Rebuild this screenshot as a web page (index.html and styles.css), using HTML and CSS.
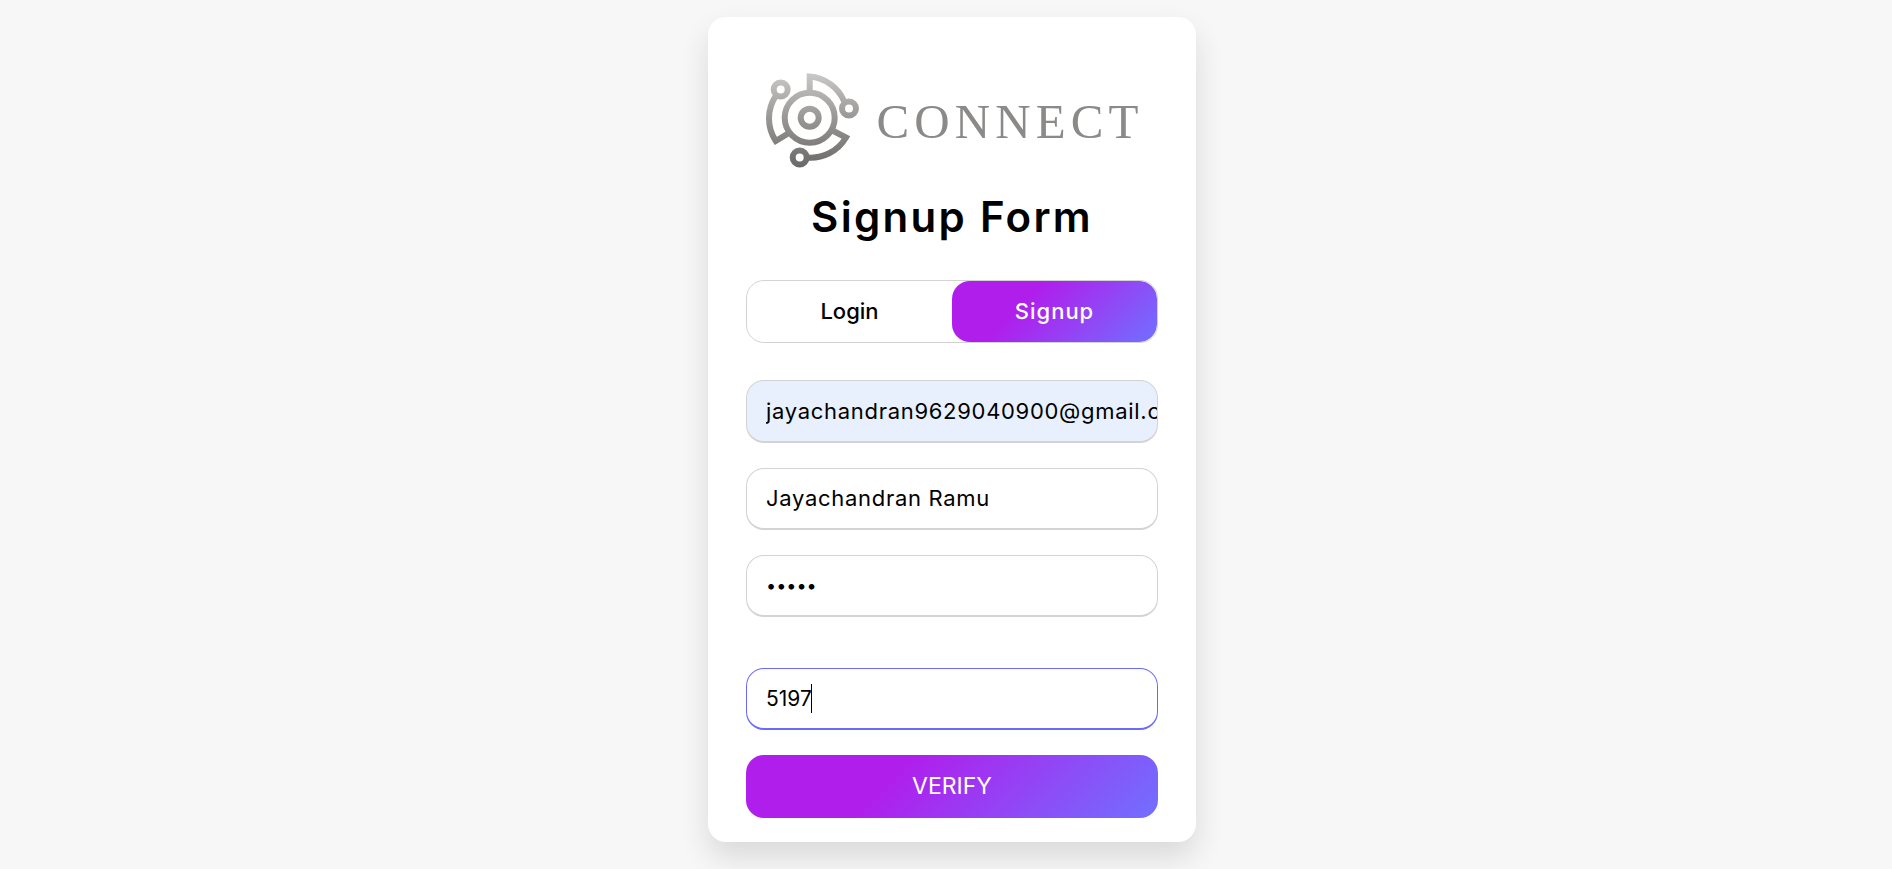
FILE: index.html
```html
<!DOCTYPE html>
<html lang="en">
<head>
<meta charset="utf-8">
<title>Signup Form</title>
<link rel="stylesheet" href="styles.css">
</head>
<body>
<main class="card">
  <div class="logo">
    <svg class="logo-mark" viewBox="0 0 110 110" width="110" height="110" aria-hidden="true">
      <defs>
        <linearGradient id="metal" gradientUnits="userSpaceOnUse" x1="50" y1="8" x2="50" y2="102">
          <stop offset="0" stop-color="#cbc9c7"/>
          <stop offset="0.5" stop-color="#979593"/>
          <stop offset="1" stop-color="#6c6a68"/>
        </linearGradient>
      </defs>
      <g fill="none" stroke="url(#metal)" stroke-width="6">
        <circle cx="51.7" cy="52.8" r="9"/>
        <circle cx="51.7" cy="52.8" r="25"/>
        <circle cx="91" cy="43.5" r="7"/>
        <circle cx="22.7" cy="24.5" r="7"/>
        <circle cx="41.7" cy="92.5" r="7"/>
        <path d="M51.7 28V11.5A41 41 0 0 1 86 36"/>
        <path d="M18 30.5A41 41 0 0 0 17.8 76L32.5 67"/>
        <path d="M48.5 92.5A41 41 0 0 0 88 72.5L73.5 65"/>
      </g>
    </svg>
    <span class="logo-word">CONNECT</span>
  </div>
  <h1 class="title">Signup Form</h1>
  <div class="tabs">
    <button class="tab" type="button">Login</button>
    <button class="tab tab-active" type="button">Signup</button>
  </div>
  <form class="form">
    <input class="field field-wide field-autofill" type="email" value="jayachandran9629040900@gmail.com">
    <input class="field field-wide" type="text" value="Jayachandran Ramu">
    <input class="field field-password" type="password" value="12345">
    <div class="code-wrap">
      <input class="field field-focus" type="text" value="5197">
      <span class="caret"></span>
    </div>
    <button class="submit" type="button">VERIFY</button>
  </form>
</main>
</body>
</html>
```
FILE: styles.css
```css
* { box-sizing: border-box; }

html, body { height: 100%; }

body {
  margin: 0;
  padding: 17px 0 0 12px;
  background: #f7f7f7;
  display: flex;
  justify-content: center;
  align-items: flex-start;
  font-family: Inter, "Liberation Sans", sans-serif;
  color: #000;
  overflow: hidden;
}

.card {
  width: 488px;
  height: 825px;
  padding: 48px 38px 0;
  background: #fff;
  border-radius: 18px;
  box-shadow: 0 15px 30px rgba(0, 0, 0, 0.12);
}

.logo {
  display: flex;
  align-items: center;
  justify-content: center;
  height: 110px;
  gap: 8px;
  padding-right: 2px;
}

.logo-mark { flex: none; }

.logo-word {
  font-family: "Liberation Serif", serif;
  font-size: 49px;
  line-height: 1;
  letter-spacing: 5.1px;
  color: #8c8a88;
  margin-top: 3px;
}

.title {
  margin: 12px 0 33px;
  height: 60px;
  line-height: 60px;
  font-size: 42px;
  font-weight: 600;
  letter-spacing: 2.3px;
  text-align: center;
}

.tabs {
  display: flex;
  height: 63px;
  border: 1px solid #d3d3d3;
  border-radius: 18px;
  overflow: hidden;
}

.tab {
  flex: 1;
  padding: 0 0 2px;
  border: 0;
  border-radius: 18px;
  background: transparent;
  color: #000;
  font: 500 22px Inter, "Liberation Sans", sans-serif;
}

.tab-active {
  color: #fff;
  letter-spacing: 1px;
  background: linear-gradient(135deg, #b01eec 35%, #7170ff 100%);
}

.form {
  display: flex;
  flex-direction: column;
  gap: 25.5px;
  margin-top: 37px;
}

.field {
  display: block;
  width: 100%;
  height: 62px;
  padding: 0 0 0 19px;
  border: 1px solid #d3d3d3;
  border-bottom-width: 2px;
  border-radius: 18px;
  background: #fff;
  color: #000;
  font: 400 21px Inter, "Liberation Sans", sans-serif;
  outline: none;
}

.field-wide {
  font-size: 22px;
  letter-spacing: 0.7px;
}

.field-password { font-size: 18px; }

.field-autofill {
  height: 63px;
  margin-bottom: -1px;
  background: #e8f0fe;
}

.field-focus {
  border-color: #6a6aff;
  caret-color: transparent;
}

.code-wrap {
  position: relative;
  margin-top: 25.5px;
}

.caret {
  position: absolute;
  left: 65px;
  top: 16px;
  width: 1px;
  height: 29px;
  background: #000;
}

.submit {
  display: block;
  width: 100%;
  height: 63px;
  margin-top: -0.5px;
  padding: 0 0 2px;
  border: 0;
  border-radius: 18px;
  color: #fff;
  background: linear-gradient(135deg, #b01eec 35%, #7170ff 100%);
  font: 400 23px Inter, "Liberation Sans", sans-serif;
}
```
